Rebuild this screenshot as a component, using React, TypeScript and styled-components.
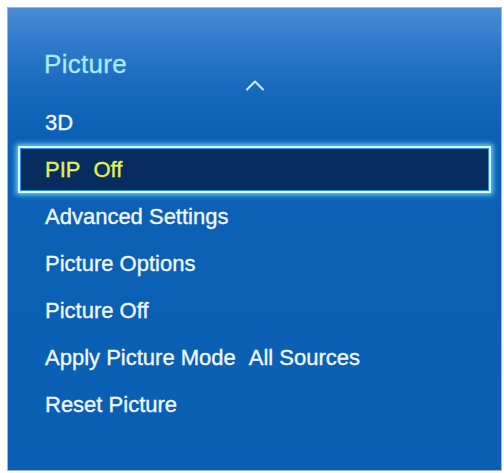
//* import third-party deps
import styled, { createGlobalStyle } from "styled-components";

//* data for the menu list
const items: { label: string; value?: string }[] = [
  { label: "3D" },
  { label: "PIP", value: "Off" },
  { label: "Advanced Settings" },
  { label: "Picture Options" },
  { label: "Picture Off" },
  { label: "Apply Picture Mode", value: "All Sources" },
  { label: "Reset Picture" },
];

const SELECTED = 1;

/*
 * App renders the TV "Picture" settings menu
 @returns JSX.element jsx structure for the menu panel
*/
const App = (): JSX.Element => {
  return (
    <>
      <GlobalStyle />
      <Panel>
        <Title>Picture</Title>
        <ScrollHint>
          <svg width="20" height="12" viewBox="0 0 20 12">
            <path
              d="M2 10.5 L10 2.5 L18 10.5"
              fill="none"
              stroke="#d6ecfb"
              strokeWidth="2"
              strokeLinecap="round"
              strokeLinejoin="round"
            />
          </svg>
        </ScrollHint>
        <MenuList>
          {items.map((item, i) => (
            <MenuItem key={item.label} $selected={i === SELECTED}>
              {item.label}
              {item.value && <Value>{item.value}</Value>}
            </MenuItem>
          ))}
        </MenuList>
      </Panel>
    </>
  );
};

export default App;

//lines below this point are styled-components logic

const GlobalStyle = createGlobalStyle`
  body {
    margin: 0;
    background: #ffffff;
    font-family: "Liberation Sans", Arial, sans-serif;
  }
`;

/*
 * Panel is the blue menu box
*/
const Panel = styled.div`
  box-sizing: border-box;
  width: 495px;
  height: 464px;
  margin: 7px 0 0 7px;
  border: 1px solid #a3b7cb;
  padding: 41px 0 0 0;
  display: flex;
  flex-direction: column;
  background: linear-gradient(
    180deg,
    #4a8bd4 0px,
    #2d78ca 40px,
    #1568bd 85px,
    #0c60b6 120px,
    #0a5fb5 100%
  );
`;

/*
 * Title is the "Picture" heading
*/
const Title = styled.h1`
  margin: 0;
  padding-left: 36px;
  font-size: 26px;
  line-height: 30px;
  font-weight: 400;
  letter-spacing: 0.3px;
  color: #a8ecf6;
  -webkit-text-stroke: 0.3px #a8ecf6;
`;

/*
 * ScrollHint holds the up caret under the title
*/
const ScrollHint = styled.div`
  height: 20px;
  display: flex;
  justify-content: center;
  align-items: flex-start;

  svg {
    display: block;
  }
`;

const MenuList = styled.ul`
  list-style: none;
  margin: 0;
  padding: 0 10px;
  display: flex;
  flex-direction: column;
`;

/*
 * MenuItem is one row, the selected one gets the glowing dark box
*/
const MenuItem = styled.li<{ $selected: boolean }>`
  box-sizing: border-box;
  height: 47px;
  display: flex;
  align-items: center;
  padding-left: ${(p) => (p.$selected ? "25px" : "27px")};
  font-size: 22px;
  color: ${(p) => (p.$selected ? "#e4ef5c" : "#f3f8fd")};
  -webkit-text-stroke: 0.35px currentColor;
  border: ${(p) => (p.$selected ? "2px solid #e6fbff" : "none")};
  background: ${(p) => (p.$selected ? "#072d5e" : "transparent")};
  box-shadow: ${(p) =>
    p.$selected
      ? "0 0 5px 2px #62d2ff, inset 0 0 0 1px #2f8fd6"
      : "none"};
`;

const Value = styled.span`
  margin-left: 13px;
`;
